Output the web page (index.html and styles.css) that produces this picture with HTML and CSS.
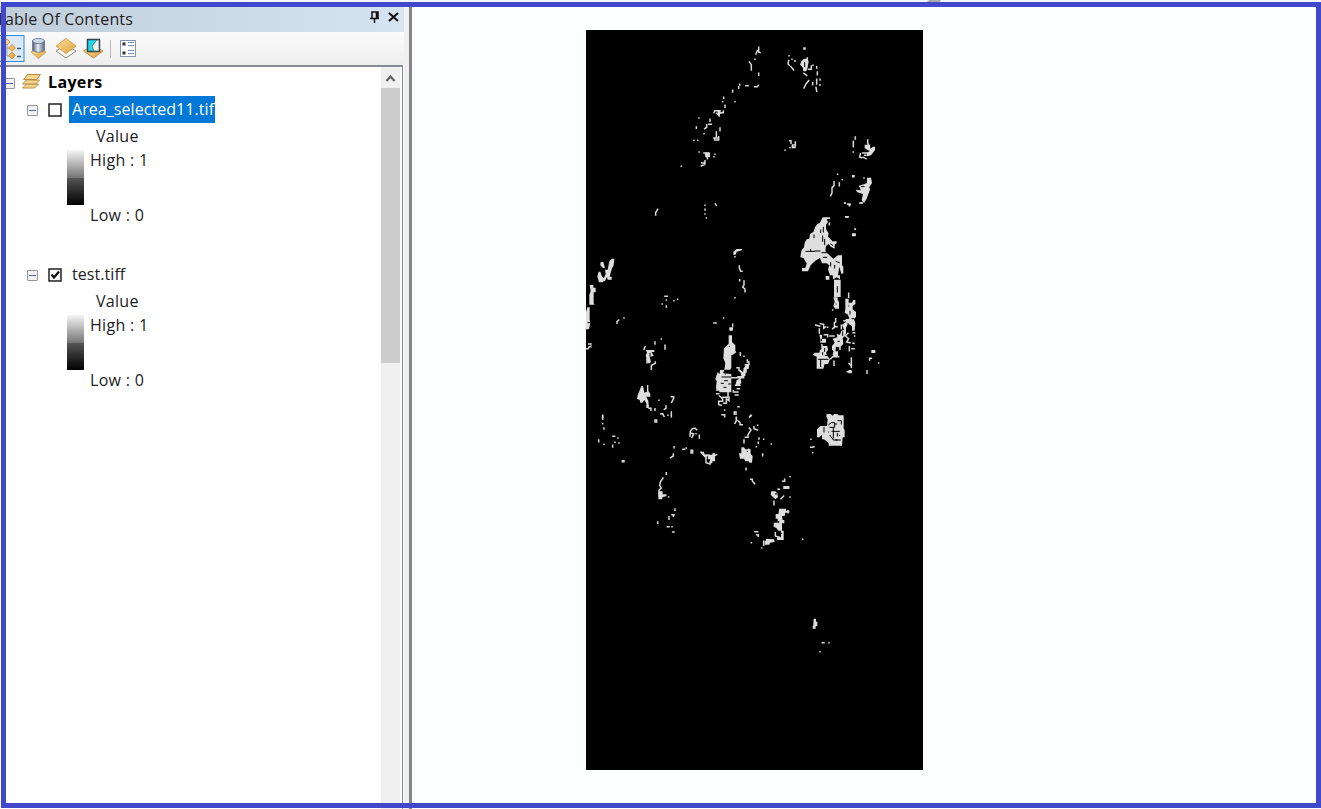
FILE: index.html
```
<!DOCTYPE html>
<html lang="en">
<head>
<meta charset="utf-8">
<title>Table Of Contents</title>
<link rel="stylesheet" href="styles.css">
</head>
<body>
<div class="window">
  <div class="strip"></div>
  <div class="workspace">
    <aside class="panel">
      <header class="title">
        <span class="title-text">Table Of Contents</span>
        <svg class="title-icons" width="32" height="16" viewBox="0 0 32 16"><path d="M3 8V2h6v6M7.500 2v6M1 8.500h9M5.500 9v4" fill="none" stroke="#111" stroke-width="1.500"/><path d="M20 3l9 8M29 3l-9 8" stroke="#111" stroke-width="2"/></svg>
      </header>
      <div class="toolbar">
        <svg width="140" height="33" viewBox="0 0 140 33">
          <defs><linearGradient id="gold" x1="0" y1="0" x2="1" y2="1"><stop stop-color="#fbe0a0"/><stop offset="1" stop-color="#dfa03c"/></linearGradient>
          <linearGradient id="steel"><stop stop-color="#4b596f"/><stop offset=".45" stop-color="#e5edf6"/><stop offset="1" stop-color="#52647f"/></linearGradient></defs>
          <rect x="-2" y="3.500" width="26" height="26" fill="#dbe9f6" stroke="#2f8ad8"/>
          <path d="M7 10v14M7 16h4M7 24h4" stroke="#999" fill="none"/>
          <path d="M12 12.500l3.500 3.500-3.500 3.500-3.500-3.500zM12 20l3.500 3.500-3.500 3.500-3.500-3.500zM7 7l3 3-3 3-3-3z" fill="url(#gold)" stroke="#d59a49"/>
          <path d="M17 16.500h4M17 24.500h4" stroke="#335d88" stroke-width="1.500"/>
          <path d="M31 20l7-3 8 3-7.500 6.500z" fill="url(#gold)" stroke="#c79a4c" stroke-width=".8"/>
          <path d="M32.500 9v9.500q6 3.500 12 0V9z" fill="url(#steel)" stroke="#52617b" stroke-width=".6"/><ellipse cx="38.500" cy="9" rx="6" ry="2.500" fill="#cbd9e9" stroke="#52617b" stroke-width=".8"/>
          <path d="M56 19l10-6 10 6-10 7z" fill="#fff" stroke="#8d8875"/>
          <path d="M56 14l10-7.500L76 14l-10 7.500z" fill="url(#gold)" stroke="#d99f4c"/>
          <path d="M83.500 19l9.500-6 10 6-9.500 7z" fill="url(#gold)" stroke="#cc9444"/>
          <path d="M87.500 7.500h12v12h-12z" fill="#20d8ed" stroke="#34444f" stroke-width="1.500"/><path d="M94 19l-2-5 5-6h2v11z" fill="#eef1f1" stroke="#4d5a61" stroke-width=".7"/>
          <path d="M110.500 8v18" stroke="#b8b8b8"/>
          <rect x="120.500" y="8.500" width="15" height="16" fill="#fff" stroke="#8396ad"/>
          <path d="M122.500 10.500h3v3h-3zM122.500 19.500h3v3h-3z" fill="#333"/><path d="M128 10.500h6M128 13.500h6M128 18.500h6M128 21.500h6" stroke="#7893b3"/>
        </svg>
      </div>
      <div class="listbox">
        <div class="tree">
          <div class="row root">
            <i class="toggle"></i>
            <svg class="stack" width="21" height="18" viewBox="0 0 21 18"><g fill="#f6d68e" stroke="#b98a45"><path d="M1.500 16l4-4h12l-4 4z"/><path d="M1.500 12l4-4h13l-4 4z"/><path d="M2.500 7.500l4-5h13l-4 5z"/></g></svg>
            <b>Layers</b>
          </div>
          <section class="layer">
            <div class="row"><i class="toggle"></i><svg class="check" width="14" height="14"><rect x="1" y="1" width="12" height="12" fill="#fff" stroke="#222" stroke-width="1.500"/></svg><span class="name selected">Area_selected11.tif</span></div>
            <div class="value">Value</div>
            <div class="legend"><div class="ramp"></div><div class="limits"><span>High : 1</span><span>Low : 0</span></div></div>
          </section>
          <section class="layer">
            <div class="row"><i class="toggle"></i><svg class="check" width="14" height="14"><rect x="1" y="1" width="12" height="12" fill="#fff" stroke="#222" stroke-width="1.500"/><path d="M3.500 6.500l2.500 3 5-6" fill="none" stroke="#111" stroke-width="2.200"/></svg><span class="name file">test.tiff</span></div>
            <div class="value">Value</div>
            <div class="legend"><div class="ramp"></div><div class="limits"><span>High : 1</span><span>Low : 0</span></div></div>
          </section>
        </div>
        <div class="scroll">
          <svg width="19" height="20" viewBox="0 0 19 20"><path d="M5.500 13l4-4.500 4 4.500" fill="none" stroke="#606060" stroke-width="2.200"/></svg>
          <div class="thumb"></div>
        </div>
      </div>
    </aside>
    <div class="splitter"></div>
    <main class="map">
      <svg class="raster" width="337" height="740" viewBox="0 0 337 740">
        <rect width="337" height="740" fill="#000"/>
        <!-- northern clusters -->
        <g transform="translate(54 0) scale(.33333)">
          <path class="d" d="M356 52v14l4 2M352 62l-4 10M345 88h0M328 96l6 8v16M356 130v6M344 170h8l3-4M318 167h6M299 163v2M296 170v5M278 181v5M251 202v3M248 215h0M285 215h0M255 226v6M244 248h6v-5M222 248l2-6h16v8M230 250l8 8M177 264h0M169 291v4M210 268v6M214 283h-8M200 284v8l-6 4M192 311h0M240 294v8M229 306v14M236 320v10h-12l-2-6h10M162 331h0M173 331h0M177 366h0M192 369h14M202 370v16M222 380h0M225 373h0M195 392v8l-10-2M184 408l10-4M124 409h0M53 538l-6 10v7M195 526h0M195 538v2M195 552h0M199 564h0M226 522l3 4M449 332h4v8M466 336v10M458 350h6M450 353h0M435 361h0"/>
          <path class="d" d="M447 77h0M446 92l-2 10 4 4M456 88h0M465 92v2M453 110l8 10M492 54h3v3h-3zM502 84v6M506 118h8v-10M519 106h0M530 110v4M532 126v8M540 148v2M530 148v14M540 164v2M528 172l2 12M518 158v6M506 152l-8 10-6 12M492 130l8 6M646 321v6M640 334v16M640 366h0M683 330v10l4 6M661 371l-2 10 6 2M668 369h14M670 382l8 4M674 376h4M593 433h0M607 449h0M582 455v12l-6 6v16l-4 8M598 459v8M638 437h4v3h-4zM672 444h0M615 519h0M624 523h6l-2 4M661 519h5M672 515h0M617 560h7M645 598h0"/>
          <path class="b" d="M480 104L484 94 492 86H502L506 94 502 118 498 124H490L488 112zM455 343h12v12h-12zM194 368h16v14h-14zM232 242h8v15h-6zM674 344h16l1 12 8-6h6v10l-12 16-12 3v-10l8-6-15-8zM681 443h12l3 16-8 12 2 8-12 32-9 6-4-6 4-19-17-5-5-8 16 2-7-14 16-4 9-4zM636 610h11v9h-11z"/>
          <path class="h" d="M494 98v12M462 348h0M664 470h8"/>
        </g>
        <!-- eastern cluster -->
        <g transform="translate(194 170) scale(.33333)">
          <path class="b" d="M128 52H150V57H140L144 66 138 74V88L146 100 144 110 158 124H170V130L164 134V146L152 140 146 132 138 138 136 152 142 160 160 176 174 166H186V196L190 200V220L184 222 178 200 174 226H180V238L170 232 160 238 158 226H150L144 208 148 196 140 190H126L120 174 106 182 92 196 84 214H66V204H76L80 190 70 174 61 172 64 152 72 142 74 128 80 118 88 116 90 102 100 96 106 80 112 72 120 68zM137 228h11v11h-11zM162 239h20v52h-20zM160 292h13v8l4 6v20H165l-5-8 4-12zM196 296h10v12h10l4-8h6v12l-8 6v10l10 8v14l-6 8 4 12-2 22h-8v-14l-10-6-8 10v18l-4 8-6 6 2 18-10 10-12-2-2 16-10-6v-12l8-10-6-12 14-4-2-10 10 2 4-12 8-2-6-16 12-8-2-8 12-2-4-12-10-6 2-10zM118 404h8v12h12v12h-17v-10zM104 458h14l2-8 6-4v-8h16l2 12-6 8 6 12 6 8-6 14h-10l-4 14h-20v-36l-12-6zM160 454h14v14l-10 4-6-8zM205 510h10v10h-10zM274 450h12v9h-12zM217 101h10v6h-10z"/>
          <path class="d" d="M107 375l12 4M121 371l10 2v12l6-4M118 387v12M133 404h10v6M143 382h0M204 400l-8 8 10 8-6 10 10 2M219 398h5M224 408h0M219 430h3M208 440v12M216 446h6M214 474v28M207 490l7 8M202 515h12M261 520v-8M269 480v-5h5M296 489h0M158 330h0M206 280v12M126 434v10M152 476l6-6h18M162 484v12M180 448v-16M192 362h10M194 9h2M204 12l6 2M240 9h6M198 51h6M226 88h0M167 356v10l-4 2v12h8M184 376v10M148 70v4M166 380l-8 6M150 408h12M165 438l-4 10"/>
          <path class="h" d="M102 105v8M122 90v8M130 82v14M128 108v16M134 118v16M78 154h26M106 153h14M92 148v6M126 158h14M130 172h10M158 118v4M152 132l6 4M152 188v10M164 196v8M172 260v16M168 184l10 4M206 318h0M210 334v8M216 356h6M204 370v8M188 396v10M178 398h0M174 424h4M124 418v4M134 446v8M128 458v6M116 478h28M122 480v20M136 466h8M168 312h0"/>
        </g>
        <!-- western and central clusters -->
        <g transform="translate(0 200) scale(.33333)">
          <path class="b" d="M70 94l8-8h7l-2 20-6 12-6 22h6v9h-12l-2-8-6 12h-4l-2 4h-12l-5-18 4-14h5l4 12 6 8 6-12-2-14h8zM44 96h8l5 18h-6l-8-8zM11 165h11v8h7v14h-6v33l3 4H10v-30l4-10zM4 232h7v36l2 10-4 20H0v-52zM428 316h10v20l10 10v22l-12 8v36l-3 7h-18l3-20-6-14 2-30 14-14zM402 420h12l-2 10 24 2v55h-34l-12-12 2-22-4-6 6-16h7zM430 292h12l-2 10h-10zM442 65l10-8h16v4l-16 4-3 9h-7zM179 360h26v6h-8l6 12-12 2 4 16-4 4h-6l-6-24 4-8zM166 468h5l4 20 8-3v-20h4v17l6 10v8h-12l6 12 2 22h-8v-14l-6-10-6 8h-6l-2-8-8-4 2-10z"/>
          <path class="d" d="M447 80h0M460 108v6l4 10h4M461 149v3M474 153v12l-4 6 7 6v8M447 203h0M413 264h0M384 279h6M440 283v5M114 264h0M98 270l-5 5v5M0 356h6l4-6h6v-8H8M229 222h0M241 228v3M241 210h0M237 199h7M264 212h0M275 208h0M226 327h0M207 336v6M237 346v11M177 350l-3 8M208 396v4l-12 6v12M183 386v12M219 511h0M256 500h7v5l-6 12M240 528v7l-5 3M189 535h6v6M207 536v5M224 552l6-1 4 8M256 546v14M246 556h0M50 556v12"/>
          <path class="d" d="M448 366l-8 6M463 368v8M474 379h0M484 390v6h5v7M478 404h8v10h-6v12h-6l-4 14h-14M453 413h6v8l8 5v8M437 443h36v-6M462 446v12h-8l-4 8h12M442 482v4h14M454 476h6M448 495h8M396 430l-4 16M393 469v12M392 491h6M400 498l10 8v8h-12v10l8 2M411 502h18v10l-8-6v14h-8M426 488v10M416 540h0M408 554h8v6M446 546h4v7M451 565h0M456 530h3M491 561l5-4"/>
          <path class="b" d="M460 418l12 10v-12l10-14h6v12l-8 6-2 18h-10zM452 450l10-4 4 12-8 10h-10z"/>
          <path class="h" d="M430 349h0M408 441h26M416 452h8M406 460h6M414 472h6M428 462h5M418 432h0M192 370v8M18 342v10M6 278h6"/>
        </g>
        <!-- southern clusters -->
        <g transform="translate(0 360) scale(.33333)">
          <path class="d" d="M50 77v5M50 101h0M54 114v3M38 150v5M54 163h0M81 139h5M96 144h0M87 157h0M99 159h0M80 166v5M207 90h5v6h-5zM109 212h5v3h-5zM264 170v3M262 192v6l-8 5M291 178h5M301 174h0M315 181h5v8h-5zM312 138l1-14 6-8 9-1 4 4M316 130l7 2-5 10M340 136v8M330 131h0M345 186l8 10h16M360 206v12l12 4v-6M392 194l-8 4M241 248v5M231 264l-8 12-2 10 5 8-7 6v18M232 315h7M248 321h0M267 357v4M258 374h6l-2 5M249 380v8M215 396v4M244 410h5M258 410h0M260 426h4"/>
          <path class="d" d="M445 66v7M451 82v10l-4 8M456 92l6 6v6h7M494 76l-3 4M515 106h0M504 110v6l10 4M490 114l5 6-9 14v8h-8M474 150v8M488 178v4M511 170h0M519 144v3M533 148h0M517 157v3M556 162h0M530 192v5M480 235v4M494 268h5v5l7 8M612 260h0M596 268v6h-6M594 290h14v5h-14zM576 298h4M612 321h0M593 318l-8 8M564 334v10M675 148h0M674 172h4l6-2M680 188h0M507 425h8M512 434h5v5M496 458h0M527 474h0M650 448h0M568 428v10l12 4M533 454v12M589 430v18M606 362v6"/>
          <path class="b" d="M466 172h8l4 6h16v14l6 6-2 20h-8l-2-4h-10l-4-8h-12l-3-16h7zM347 185h6l4 9h22v-4h8v24h-8v6h-7v-12h-10l-10-10zM218 304h12v10h7l6 4-14 4v6h-12zM556 304h12l6 6 2 12-8 6-14-14zM580 356h20v6h10v6h-12l-2 10h-8l2 12h5v10h-7v22h5v28h-20v-8h12v-20h-8l-6-8-8-4v-12h12v-12h-6v-14h8zM540 446l24 2 2 8-14 2-2 6h-14v-12h4zM722 72h12l6 5 4-5h10l3 4h16v40l3 4v22h-6l-2 25h-40v-8l-14-11h-6v-14l-7 8h-8v-24l10-10h20l2-20-4-8z"/>
          <path class="h" d="M714 112v14M728 104l8-6h10v14h-14M756 92h10v10M742 114v30M738 124h22M732 136l10 14h12M754 130v8M761 136h0M749 150h14M728 126h0M746 102h6M568 312h4M578 394v4M364 200v10M580 430h6M484 184v0"/>
        </g>
        <g transform="translate(194 570) scale(.33333)"><path class="b" d="M101 56h7v9h4v13h-5v8h-9v-9h2z"/><path class="d" d="M127 128h5M147 128h0M120 155h0"/></g>
      </svg>
    </main>
  </div>
  <div class="mark"></div>
  <div class="frame"></div>
</div>
</body>
</html>
```
FILE: styles.css
```
body { margin: 0; font-family: "Open Sans", "Noto Sans", sans-serif; font-size: 16px; color: #222; }
.window { position: relative; width: 1321px; height: 809px; overflow: hidden; background: #fff; display: flex; flex-direction: column; }
.strip { flex: 0 0 6px; background: #f5f5f7; }
.workspace { flex: 1; display: flex; min-height: 0; }
.panel { width: 404px; display: flex; flex-direction: column; background: #fff; }
.title { height: 26px; display: flex; align-items: center; justify-content: space-between; background: linear-gradient(90deg, #c0cddb, #d6e4f2); }
.title-text { margin-left: -4px; line-height: 26px; white-space: nowrap; letter-spacing: .18px; }
.title-icons { margin: -2px 3px 0 0; }
.toolbar { height: 33px; background: linear-gradient(#fbfbfb, #eee); }
.toolbar svg { display: block; }
.listbox { flex: 1; box-sizing: border-box; width: 403px; border-top: 2px solid #858b94; border-right: 1px solid #858b94; display: flex; justify-content: space-between; }
.tree { padding-top: 1px; }
.row { display: flex; align-items: center; height: 28px; }
.toggle { box-sizing: border-box; width: 11px; height: 11px; margin-top: 3px; border: 1px solid #969696; border-radius: 1px; background: linear-gradient(#4965ac, #4965ac) center / 7px 1px no-repeat, #f3f3f3; }
.root { padding-left: 4px; height: 27px; }
.root b { margin-left: 6px; color: #000; letter-spacing: .35px; }
.stack { margin: -2px 0 0 6px; }
.layer { height: 165px; }
.layer .row { padding-left: 27px; }
.check { margin: 1px 0 0 10px; }
.name { margin: 1px 0 0 7px; padding: 0 1px 0 3px; line-height: 27px; white-space: nowrap; letter-spacing: .06px; }
.selected { background: #0078d7; color: #fff; }
.value { padding-left: 96px; height: 27px; line-height: 27px; letter-spacing: .3px; }
.legend { display: flex; padding-left: 67px; }
.ramp { width: 17px; height: 55px; background: linear-gradient(#f5f5f5, #777 50%, #555 51%, #000); }
.limits { display: flex; flex-direction: column; justify-content: space-between; margin: -1px 0 0 6px; height: 77px; letter-spacing: .3px; }
.limits span { line-height: 22px; }
.scroll { width: 19px; margin-right: 2px; background: #f0f0f0; }
.scroll svg { display: block; margin-top: 1px; }
.thumb { height: 275px; background: #cdcdcd; }
.splitter { width: 5px; background: #f0f0f0; border-right: 3px solid #858585; }
.map { flex: 1; padding: 24px 0 0 174px; background: #fdfefe; }
.raster { display: block; }
.b { fill: #dedede; }
.d { fill: none; stroke: #d9d9d9; stroke-width: 4.5; stroke-linecap: square; }
.h { fill: none; stroke: #000; stroke-width: 3; stroke-linecap: square; }
.mark { position: absolute; left: 926px; top: 0; width: 15px; height: 3px; background: #aaa; clip-path: polygon(20% 0, 100% 0, 85% 100%, 0 100%); }
.frame { position: absolute; left: 1px; top: 2px; width: 1310px; height: 796px; border: 5px solid #4048cc; }
```
